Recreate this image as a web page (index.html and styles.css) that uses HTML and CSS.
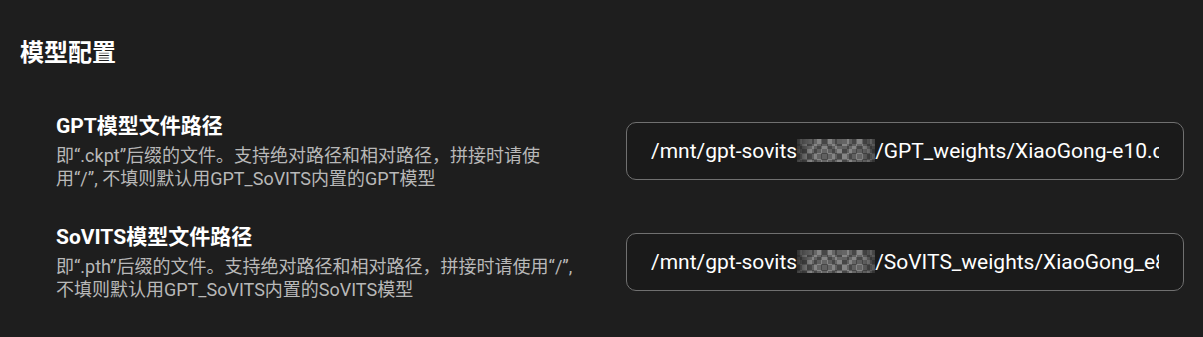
FILE: index.html
```html
<!DOCTYPE html>
<html lang="zh-CN">
<head>
    <meta charset="UTF-8">
    <meta name="viewport" content="width=device-width, initial-scale=1.0">
    <title>模型配置</title>
    <link rel="stylesheet" href="styles.css">
</head>
<body>

<!-- Model settings -->
<div class="section">
    <h2 class="section-title">模型配置</h2>

    <div class="settings">
        <!-- GPT model path -->
        <div class="setting-row">
            <div class="setting-info">
                <div class="setting-name">GPT模型文件路径</div>
                <div class="setting-desc">即“.ckpt”后缀的文件。支持绝对路径和相对路径，拼接时请使<br>用“/”, 不填则默认用GPT_SoVITS内置的GPT模型</div>
            </div>
            <div class="path-field">
                <div class="path-text">/mnt/gpt-sovits<span class="mosaic"></span>/GPT_weights/XiaoGong-e10.ckpt</div>
            </div>
        </div>

        <!-- SoVITS model path -->
        <div class="setting-row">
            <div class="setting-info">
                <div class="setting-name">SoVITS模型文件路径</div>
                <div class="setting-desc">即“.pth”后缀的文件。支持绝对路径和相对路径，拼接时请使<span class="keep">用“/”,</span> 不填则默认用GPT_SoVITS内置的SoVITS模型</div>
            </div>
            <div class="path-field">
                <div class="path-text">/mnt/gpt-sovits<span class="mosaic"></span>/SoVITS_weights/XiaoGong_e8_s192.pth</div>
            </div>
        </div>
    </div>
</div>

</body>
</html>
```

FILE: styles.css
```css
body {
    margin: 0;
    padding: 0;
    background-color: #1e1e1e;
    font-family: Roboto, "Noto Sans CJK SC", sans-serif;
    color: #ffffff;
}
.section {
    padding: 37px 19px 0 20px;
}
.section-title {
    margin: 0;
    font-size: 24px;
    line-height: 32px;
    font-weight: bold;
    color: #ffffff;
}
.settings {
    margin-top: 43px;
    padding-left: 36px;
    display: flex;
    flex-direction: column;
    gap: 33px;
}
.setting-row {
    display: grid;
    grid-template-columns: 530px minmax(0, 1fr);
    column-gap: 40px;
    align-items: center;
}
.setting-name {
    font-size: 21px;
    line-height: 28px;
    font-weight: bold;
    color: #ffffff;
    margin-bottom: 4px;
}
.setting-desc {
    font-size: 18px;
    line-height: 23px;
    color: #b8b8b8;
}
.keep {
    white-space: nowrap;
}
.path-field {
    min-width: 0;
    height: 56px;
    padding: 0 24px;
    border: 1px solid #707070;
    border-radius: 10px;
    background-color: #1a1a1a;
}
.path-text {
    line-height: 56px;
    font-size: 21px;
    white-space: nowrap;
    overflow: hidden;
}
.mosaic {
    display: inline-block;
    width: 78px;
    height: 23px;
    vertical-align: middle;
    margin-top: -3px;
    background:
        linear-gradient(90deg, rgba(30,30,30,0.7), rgba(30,30,30,0) 18%, rgba(30,30,30,0) 82%, rgba(30,30,30,0.5)),
        repeating-conic-gradient(rgba(40,40,40,0.35) 0 25%, rgba(160,160,160,0.2) 0 50%) 3px 0 / 14px 14px,
        repeating-conic-gradient(#565656 0 25%, #7e7e7e 0 50%) 0 0 / 10px 10px,
        #6a6a6a;
}
```
